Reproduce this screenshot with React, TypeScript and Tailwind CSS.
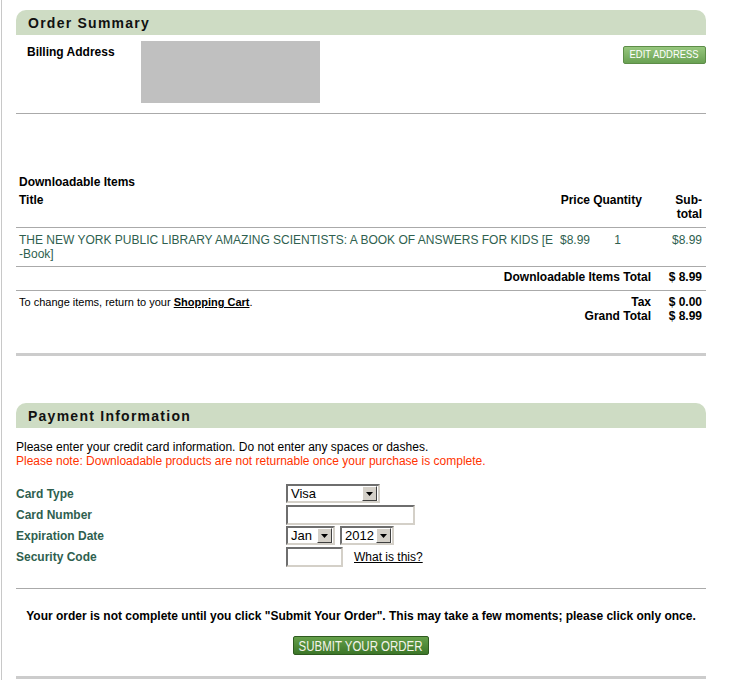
import React from "react";

const green = "text-[#2f5f4f]";

function SectionHeader({ title }: { title: string }) {
  return (
    <div className="flex h-[25px] items-center rounded-t-[10px] bg-[#cedcc4] pl-3">
      <span className="text-[14px] font-bold leading-none tracking-[1.25px] text-[#111]">{title}</span>
    </div>
  );
}

function Arrow() {
  return (
    <div className="mr-px flex h-[15px] w-[15px] shrink-0 items-center justify-center border border-t-white border-l-white border-r-[#404040] border-b-[#404040] bg-[#d4d0c8]">
      <svg width="7" height="4" viewBox="0 0 7 4">
        <path d="M0 0h7L3.5 4z" fill="#000" />
      </svg>
    </div>
  );
}

function FakeSelect({ value, className }: { value: string; className: string }) {
  return (
    <div
      className={`flex h-[19px] items-center justify-between border-2 border-t-[#6e6e6e] border-l-[#6e6e6e] border-r-[#d4d0c8] border-b-[#d4d0c8] bg-white pl-[3px] text-[13px] font-normal leading-none text-black ${className}`}
    >
      <span>{value}</span>
      <Arrow />
    </div>
  );
}

function FakeInput({ className }: { className: string }) {
  return (
    <div
      className={`border-2 border-t-[#6e6e6e] border-l-[#6e6e6e] border-r-[#d4d0c8] border-b-[#d4d0c8] bg-white ${className}`}
    />
  );
}

function Divider() {
  return <div className="h-px bg-[#aaaaaa]" />;
}

function ThickDivider() {
  return <div className="h-[3px] bg-[#cccccc]" />;
}

export default function App() {
  return (
    <div className="min-h-[680px] bg-white pl-px font-['Liberation_Sans',Arial,sans-serif] text-[12px] leading-[14px] text-black">
      <div className="min-h-[680px] border-l border-[#c8c8c8] pl-[14px]">
        <div className="w-[690px] pt-[10px]">
          {/* Order summary */}
          <SectionHeader title="Order Summary" />
          <div className="flex pt-[6px] pb-[10px]">
            <div className="w-[125px] pl-[11px] pt-[4px] font-bold">Billing Address</div>
            <div className="h-[62px] w-[179px] bg-[#c0c0c0]" />
            <div className="flex flex-1 justify-end pt-[5px]">
              <button className="flex h-[18px] w-[83px] items-center justify-center overflow-visible rounded-[2px] border border-[#5d8d48] bg-gradient-to-b from-[#97c77e] to-[#6aa153] text-[11.5px] leading-none whitespace-nowrap text-white">
                <span className="inline-block shrink-0 scale-x-[0.82]">EDIT ADDRESS</span>
              </button>
            </div>
          </div>
          <Divider />

          <div className="mt-[61px] pl-[3px] font-bold">Downloadable Items</div>
          <div className="grid grid-cols-[536px_35px_55px_57px] pt-[4px] pb-[6px] pl-[3px] font-bold">
            <div>Title</div>
            <div className="text-right">Price</div>
            <div className="text-center">Quantity</div>
            <div className="text-right">
              Sub-
              <br />
              total
            </div>
          </div>
          <Divider />
          <div className={`grid grid-cols-[536px_35px_55px_57px] py-[5px] pl-[3px] ${green}`}>
            <div>
              THE NEW YORK PUBLIC LIBRARY AMAZING SCIENTISTS: A BOOK OF ANSWERS FOR KIDS [E
              <br />
              -Book]
            </div>
            <div className="text-right">$8.99</div>
            <div className="text-center">1</div>
            <div className="text-right">$8.99</div>
          </div>
          <Divider />
          <div className="flex justify-end pt-[3px] pb-[6px] pr-[4px] font-bold">
            <span>Downloadable Items Total</span>
            <span className="w-[51px] text-right">$ 8.99</span>
          </div>
          <Divider />
          <div className="flex items-start justify-between pt-[4px] pb-[30px] pl-[3px] pr-[4px]">
            <div className="text-[11px]">
              To change items, return to your <span className="font-bold underline">Shopping Cart</span>.
            </div>
            <div className="grid grid-cols-[auto_51px] font-bold">
              <span className="text-right">Tax</span>
              <span className="text-right">$ 0.00</span>
              <span className="text-right">Grand Total</span>
              <span className="text-right">$ 8.99</span>
            </div>
          </div>
          <ThickDivider />

          {/* Payment information */}
          <div className="mt-[47px]">
            <SectionHeader title="Payment Information" />
          </div>
          <div className="mt-[12px]">
            <div>Please enter your credit card information. Do not enter any spaces or dashes.</div>
            <div className="text-[#ff3300]">
              Please note: Downloadable products are not returnable once your purchase is complete.
            </div>
          </div>

          <div className={`mt-[15px] font-bold ${green}`}>
            <div className="flex h-[21px] items-center">
              <div className="w-[270px]">Card Type</div>
              <FakeSelect value="Visa" className="w-[94px]" />
            </div>
            <div className="flex h-[21px] items-center">
              <div className="w-[270px]">Card Number</div>
              <FakeInput className="h-[20px] w-[129px]" />
            </div>
            <div className="flex h-[21px] items-center">
              <div className="w-[270px]">Expiration Date</div>
              <FakeSelect value="Jan" className="w-[49px]" />
              <FakeSelect value="2012" className="ml-[5px] w-[54px]" />
            </div>
            <div className="flex h-[22px] items-center">
              <div className="w-[270px]">Security Code</div>
              <FakeInput className="h-[20px] w-[57px]" />
              <span className="ml-[11px] font-normal text-black underline">What is this?</span>
            </div>
          </div>

          <div className="mt-[20px]">
            <Divider />
          </div>
          <div className="mt-[20px] text-center font-bold">
            Your order is not complete until you click "Submit Your Order". This may take a few moments; please
            click only once.
          </div>
          <div className="mt-[13px] flex justify-center">
            <button className="flex h-[19px] w-[136px] items-center justify-center overflow-visible rounded-[2px] border border-[#2e5a1f] bg-gradient-to-b from-[#65a04a] to-[#3c7628] text-[14px] leading-none whitespace-nowrap text-[#f4f4ea]">
              <span className="inline-block shrink-0 scale-x-[0.82]">SUBMIT YOUR ORDER</span>
            </button>
          </div>
          <div className="mt-[21px]">
            <ThickDivider />
          </div>
        </div>
      </div>
    </div>
  );
}
